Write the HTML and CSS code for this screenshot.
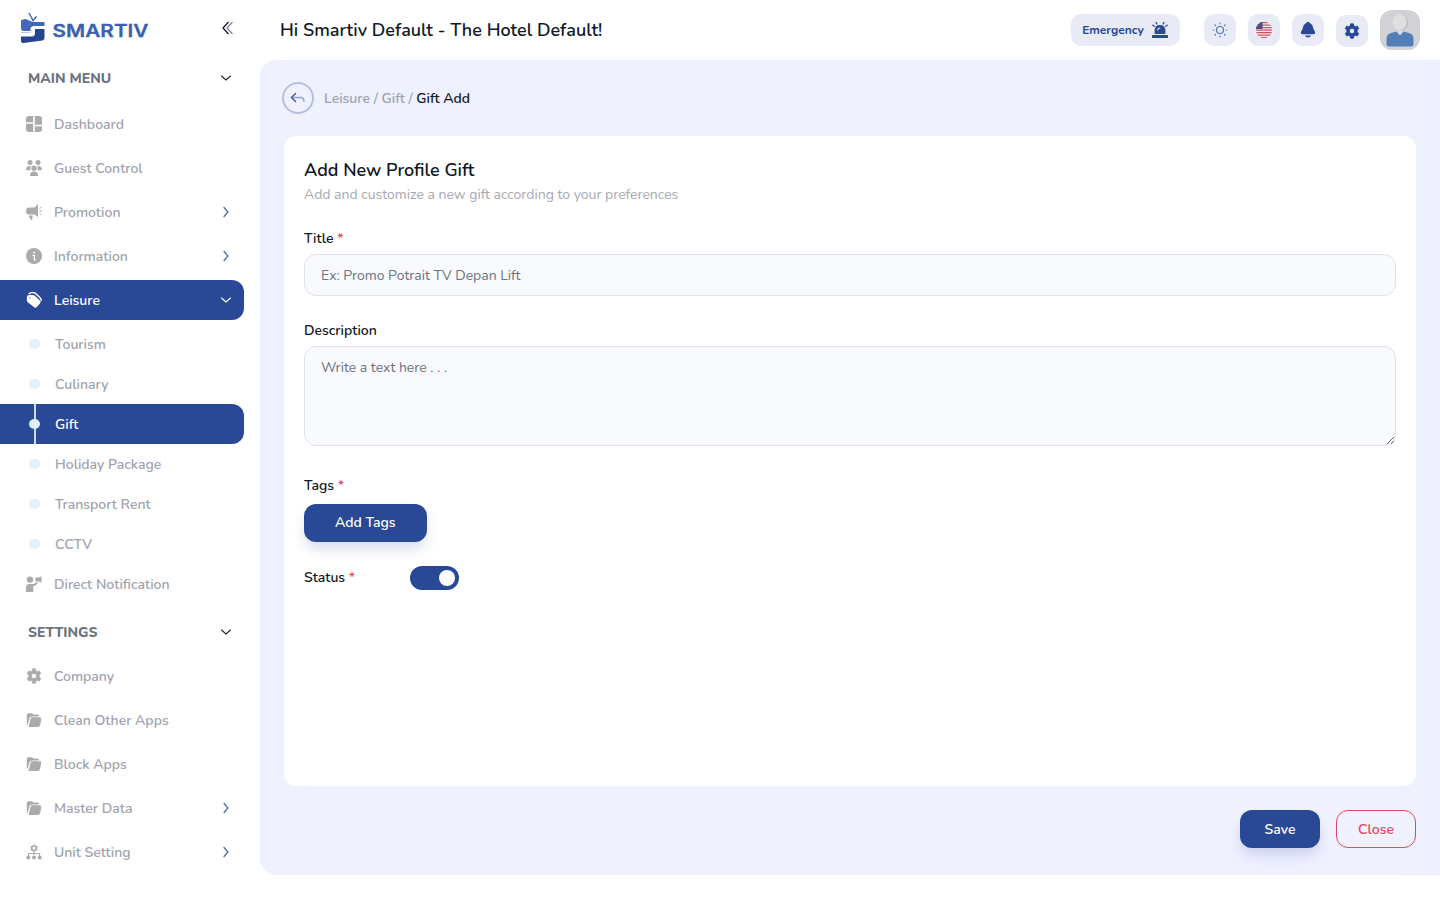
FILE: index.html
```html
<!DOCTYPE html>
<html lang="en">
<head>
    <meta charset="UTF-8">
    <meta name="viewport" content="width=device-width, initial-scale=1.0">
    <title>Smartiv - Gift Add</title>
    <link rel="stylesheet" href="styles.css">
</head>
<body>

    <!-- shared icons -->
    <svg class="icon-defs" width="0" height="0">
        <symbol id="chevron-right" viewBox="0 0 12 12">
            <path d="M4 1.500L8 6L4 10.500" fill="none" stroke="currentColor" stroke-width="1.200" stroke-linecap="round"/>
        </symbol>
        <symbol id="chevron-down" viewBox="0 0 12 12">
            <path d="M1.500 4L6 7.900L10.500 4" fill="none" stroke="currentColor" stroke-width="1.100" stroke-linecap="round"/>
        </symbol>
        <symbol id="gear" viewBox="0 0 16 16">
            <path fill-rule="evenodd" d="M6.700 .8h2.600l.6 2.100 1.400.8 2.100-.6 1.300 2.300-1.500 1.700v1.800l1.500 1.700-1.300 2.300-2.100-.6-1.400.8-.6 2.100H6.700l-.6-2.100-1.400-.8-2.100.6-1.300-2.300 1.500-1.700V7.100L1.300 5.400l1.300-2.300 2.100.6 1.400-.8zM8 5.300a2.700 2.700 0 1 0 0 5.400a2.700 2.700 0 0 0 0-5.400z" fill="currentColor" stroke="currentColor" stroke-width=".9" stroke-linejoin="round"/>
        </symbol>
        <symbol id="folder" viewBox="0 0 16 16">
            <path d="M.8 11.800V3Q.8 1.300 2.500 1.300h2.800q1 0 1.600.7l.5.500h3.800q1.900 0 2.100 1.900H6.200Q4.200 4.400 3.600 6.200L1.500 13Q.8 12.600.8 11.800z" fill="currentColor"/>
            <path d="M6.300 5.300h7.600q1.700 0 1.300 1.800l-.9 5.500q-.4 2.300-2.400 2.300H2.500L4.600 6.700q.4-1.400 1.700-1.400z" fill="currentColor"/>
        </symbol>
    </svg>

    <div class="layout">
        <aside class="sidebar">
            <div class="brand">
                <svg class="logo" width="132" height="34" viewBox="0 0 132 34">
                    <path d="M9 2l4 7.500M16.500 5.500L12.500 10" fill="none" stroke="#3d64b0" stroke-width="1.400"/>
                    <path d="M1 9.500Q5 6.500 9 9.500q3 2 15.500 1.500v4H14.500q-4.200 0-4.200 4v1H4Q1 20 1 17z" fill="#4369b6"/>
                    <path d="M15 18h9.500v9q0 2-2 2.400L3.500 32Q1 32.300 1 30v-4.500h10.500q3.500 0 3.500-3.500z" fill="#26458f"/>
                    <path d="M1 21.500h8q2.500 0 2.500-2.300" fill="none" stroke="#a9bbdf" stroke-width=".8"/>
                    <text x="32.500" y="26" textLength="96" lengthAdjust="spacingAndGlyphs">SMARTIV</text>
                </svg>
                <svg width="12" height="14" viewBox="0 0 12 14">
                    <path d="M6.500 1L1 7l5.500 6" fill="none" stroke="#101827" stroke-width="1.300"/>
                    <path d="M10.500 1L5 7l5.500 6" fill="none" stroke="#7c828d" stroke-width="1.200"/>
                </svg>
            </div>

            <div class="menu-heading">MAIN MENU <svg class="chevron"><use href="#chevron-down"/></svg></div>
            <ul class="menu">
                <li class="menu-item">
                    <svg class="icon" viewBox="0 0 16 16" fill="currentColor"><path d="M3 0h4.200v6.300H0V3Q0 0 3 0zM8.800 0H13q3 0 3 3v5.800H8.800zM0 7.700h7.200V16H3q-3 0-3-3zM8.800 10.200H16V13q0 3-3 3H8.800z"/></svg>
                    <span>Dashboard</span>
                </li>
                <li class="menu-item">
                    <svg class="icon" viewBox="0 0 16 16" fill="currentColor"><circle cx="4" cy="2.600" r="2.500"/><circle cx="12" cy="2.600" r="2.500"/><circle cx="8" cy="8.200" r="2.600"/><path d="M0 10.300Q0 6 3.600 6l1.200.4q-1.300 2 0 3.900zM16 10.300Q16 6 12.400 6l-1.200.4q1.300 2 0 3.900zM4 16q0-4.400 4-4.400t4 4.400z"/></svg>
                    <span>Guest Control</span>
                </li>
                <li class="menu-item">
                    <svg class="icon" viewBox="0 0 16 16" fill="currentColor"><path d="M12 0v13L8.500 10.500H3Q0 10.500 0 7T3 3.500h5.500zM2.700 11.600h4l-.5 4.200H4.600z"/><path d="M13.500 4.300l2-1M13.500 7H16M13.500 9.700l2 1" stroke="currentColor" stroke-width="1"/></svg>
                    <span>Promotion</span>
                    <svg class="chevron"><use href="#chevron-right"/></svg>
                </li>
                <li class="menu-item">
                    <svg class="icon" viewBox="0 0 16 16"><circle cx="8" cy="8" r="8" fill="currentColor"/><circle cx="8.200" cy="4.500" r="1" fill="#fff"/><path d="M6.500 7.300H8.400V12M8.400 12h1.200" fill="none" stroke="#fff" stroke-width="1.300"/></svg>
                    <span>Information</span>
                    <svg class="chevron"><use href="#chevron-right"/></svg>
                </li>
                <li class="menu-item active">
                    <svg class="icon" viewBox="0 0 16 16"><path d="M.8 5.500Q.8 3.300 3 3.100L6.500 2.900q1.200 0 2 .7l5.200 4.700q1.600 1.600.2 3.200l-3 3.500q-1.500 1.400-3 0L1.700 10.300Q.8 9.500.8 8.300z" fill="currentColor"/><path d="M2.500 1.800Q6 .3 8.200.8q.8.200 1.400.8l4.500 4.200q1.500 1.600.8 3.200" fill="none" stroke="currentColor" stroke-width="1.400"/><circle cx="4" cy="5.800" r=".6" fill="#294896"/></svg>
                    <span>Leisure</span>
                    <svg class="chevron"><use href="#chevron-down"/></svg>
                </li>
            </ul>
            <ul class="submenu">
                <li>Tourism</li>
                <li>Culinary</li>
                <li class="active">Gift</li>
                <li>Holiday Package</li>
                <li>Transport Rent</li>
                <li>CCTV</li>
            </ul>
            <ul class="menu">
                <li class="menu-item">
                    <svg class="icon" viewBox="0 0 16 16" fill="currentColor"><circle cx="4" cy="3.600" r="3.200"/><path d="M0 16v-4.500Q0 8 3.500 8H7q2.500 0 3.300-2l1.500.5Q10.800 9.800 7.300 10v6zM9.500 1.500h3.300L15.500.200v6.500l-2.700-1.100H9.500z"/></svg>
                    <span>Direct Notification</span>
                </li>
            </ul>

            <div class="menu-heading">SETTINGS <svg class="chevron"><use href="#chevron-down"/></svg></div>
            <ul class="menu">
                <li class="menu-item"><svg class="icon"><use href="#gear"/></svg><span>Company</span></li>
                <li class="menu-item"><svg class="icon"><use href="#folder"/></svg><span>Clean Other Apps</span></li>
                <li class="menu-item"><svg class="icon"><use href="#folder"/></svg><span>Block Apps</span></li>
                <li class="menu-item">
                    <svg class="icon"><use href="#folder"/></svg>
                    <span>Master Data</span>
                    <svg class="chevron"><use href="#chevron-right"/></svg>
                </li>
                <li class="menu-item">
                    <svg class="icon" viewBox="0 0 16 16"><circle cx="8" cy="4.300" r="2.300" fill="none" stroke="currentColor" stroke-width="1.700"/><path d="M8 .3v1.700M8 6.600V11M4.500 2.300l1.500.9M11.500 2.300l-1.500.9M4.500 6.300L6 5.400M11.500 6.300L10 5.400M2.500 12V9.500h11V12" fill="none" stroke="currentColor" stroke-width="1.100"/><g fill="currentColor"><circle cx="2.300" cy="13.600" r="2"/><circle cx="8" cy="13.600" r="2"/><circle cx="13.700" cy="13.600" r="2"/></g></svg>
                    <span>Unit Setting</span>
                    <svg class="chevron"><use href="#chevron-right"/></svg>
                </li>
            </ul>
        </aside>

        <div class="page">
            <header class="topbar">
                <h1>Hi Smartiv Default - The Hotel Default!</h1>
                <div class="actions">
                    <button class="emergency">
                        <span>Emergency</span>
                        <svg width="16" height="16" viewBox="0 0 16 16" fill="#294896"><path d="M2.600 12V8.500Q2.600 3 8 3t5.400 5.500V12z"/><rect x="0" y="13" width="16" height="3" rx=".6"/><path d="M.8 3.200l1.500 1M4 .4l.8 1.500M12 .4l-.8 1.500M15.200 3.200l-1.500 1" stroke="#294896" stroke-width="1.300" stroke-linecap="round"/><path d="M5.700 8Q5.900 6.200 7.700 6" fill="none" stroke="#e9ebf5" stroke-width="1.200" stroke-linecap="round"/></svg>
                    </button>
                    <button class="icon-btn">
                        <svg width="16" height="16" viewBox="0 0 16 16" fill="none" stroke="#5873b3" stroke-width="1.200" stroke-linecap="round"><circle cx="8" cy="8" r="3.500"/><path d="M8 1.200v.6M8 14.200v.6M1.200 8h.6M14.200 8h.6M3 3l.5.5M12.500 12.500l.5.5M3 13l.5-.5M12.500 3.500l.5-.5"/></svg>
                    </button>
                    <button class="icon-btn">
                        <svg width="18" height="18" viewBox="0 0 18 18"><defs><clipPath id="flag"><circle cx="9" cy="9" r="8.200"/></clipPath></defs><g clip-path="url(#flag)"><path fill="#f4edf2" d="M0 0h18v18H0z"/><path d="M0 1.700h18M0 4.200h18M0 6.700h18M0 9.200h18M0 11.700h18M0 14.200h18M0 16.700h18" stroke="#d24f61" stroke-width="1.250"/><path fill="#414a78" d="M0 0h7.500v8H0z"/><path d="M3 3h4M2 5h5M1.500 7H7" stroke="#98a0bf" stroke-width=".5" stroke-dasharray=".7 1"/></g></svg>
                    </button>
                    <button class="icon-btn">
                        <svg width="16" height="16" viewBox="0 0 16 16" fill="#294896"><path d="M8 0q1.600 0 2.100 1.200 2.700 1.100 3 4.400.1 1.600 1.200 2.900.9 1.200.8 2.300-.2 1.500-1.800 1.500H2.700q-1.600 0-1.800-1.500-.1-1.100.8-2.300 1.100-1.300 1.200-2.900.3-3.300 3-4.400Q6.400 0 8 0zM5 13.500h6q-.8 2-3 2t-3-2z"/></svg>
                    </button>
                    <button class="icon-btn settings"><svg width="16" height="16"><use href="#gear"/></svg></button>
                    <svg class="avatar" viewBox="0 0 40 40"><path fill="#d1d2d5" d="M0 0h40v40H0z"/><ellipse cx="21" cy="12.500" rx="7" ry="8" fill="#bdc0c3"/><ellipse cx="19.500" cy="12" rx="7" ry="8" fill="#dfdfe0"/><path d="M6.500 34V29q0-5 4.500-6l5.500-1.500 3.500 4 3.500-4L29 23q4.500 1 4.500 6v5q0 2.500-2.500 2.500H9q-2.500 0-2.500-2.500z" fill="#547fb6"/><path d="M17 21l3-.5 3 .5-3 4z" fill="#dcdee2"/></svg>
                </div>
            </header>

            <main>
                <div class="breadcrumb">
                    <button class="back">
                        <svg width="16" height="14" viewBox="0 0 16 14" fill="none" stroke-width="1.300" stroke-linecap="round" stroke-linejoin="round"><path d="M2 6.500h8q4 0 4 4" stroke="#93a3cd"/><path d="M5.500 2.500L1.500 6.500l4 4" stroke="#355299"/></svg>
                    </button>
                    <p>Leisure / Gift / <b>Gift Add</b></p>
                </div>

                <form>
                    <section class="card">
                        <h2>Add New Profile Gift</h2>
                        <p class="subtitle">Add and customize a new gift according to your preferences</p>

                        <label for="title">Title <i>*</i></label>
                        <input type="text" id="title" placeholder="Ex: Promo Potrait TV Depan Lift">

                        <label for="description">Description</label>
                        <textarea id="description" placeholder="Write a text here . . ."></textarea>

                        <label>Tags <i>*</i></label>
                        <button type="button" class="btn btn-tags">Add Tags</button>

                        <div class="status">
                            <label>Status <i>*</i></label>
                            <span class="toggle"></span>
                        </div>
                    </section>

                    <div class="form-actions">
                        <button type="button" class="btn">Save</button>
                        <button type="button" class="btn btn-close">Close</button>
                    </div>
                </form>
            </main>
        </div>
    </div>

</body>
</html>
```
FILE: styles.css
```css
* {
    margin: 0;
    padding: 0;
    box-sizing: border-box;
}

body {
    background: #fff;
    color: #111827;
    font-family: Nunito, Lato, sans-serif;
    font-size: 14px;
    font-weight: 600;
    line-height: 21px;
    overflow: hidden;
}

button, input, textarea {
    font: inherit;
}

button {
    border: none;
    cursor: pointer;
}

ul {
    list-style: none;
}

.icon-defs {
    display: block;
}

.layout {
    display: flex;
    height: 900px;
}

/* Sidebar */
.sidebar {
    width: 260px;
    flex-shrink: 0;
    color: #a0a3ae;
}

.brand {
    display: flex;
    align-items: center;
    justify-content: space-between;
    height: 56px;
    padding: 0 26px 0 20px;
}

.logo text {
    font-family: Inter, sans-serif;
    font-size: 17px;
    font-weight: 600;
    fill: #3b60ae;
    stroke: #3b60ae;
    stroke-width: 0.3px;
}

.menu-heading {
    display: flex;
    align-items: center;
    justify-content: space-between;
    width: 244px;
    height: 48px;
    padding: 0 12px 0 28px;
    color: #6b7280;
    font-weight: 800;
}

.brand + .menu-heading {
    height: 44px;
    margin-bottom: 4px;
}

.menu-heading .chevron {
    color: #1c2432;
}

.menu-item {
    display: flex;
    align-items: center;
    gap: 12px;
    width: 244px;
    height: 40px;
    margin-bottom: 4px;
    padding: 0 12px 0 26px;
}

.icon {
    width: 16px;
    height: 16px;
    color: #ababab;
}

.chevron {
    width: 12px;
    height: 12px;
    margin-left: auto;
    color: #4b659b;
}

.menu-item.active,
.submenu .active {
    background: #294896;
    color: #fff;
    border-radius: 0 12px 12px 0;
}

.menu-item.active .icon,
.menu-item.active .chevron {
    color: #fff;
}

.submenu li {
    display: flex;
    align-items: center;
    gap: 15px;
    width: 244px;
    height: 40px;
    padding-left: 29px;
}

.submenu li::before {
    content: "";
    width: 11px;
    height: 10px;
    border-radius: 50%;
    background: #e0f0ff;
}

.submenu .active {
    background: linear-gradient(#c9dcf5, #c9dcf5) 33.5px 0 / 2px 100% no-repeat #294896;
}

/* Topbar */
.page {
    flex: 1;
}

.topbar {
    display: flex;
    align-items: center;
    justify-content: space-between;
    height: 60px;
    padding: 0 20px;
}

h1, h2 {
    font-size: 18px;
    font-weight: 600;
    line-height: 28px;
}

.actions {
    display: flex;
    align-items: center;
    gap: 12px;
}

.emergency,
.icon-btn {
    display: flex;
    align-items: center;
    justify-content: center;
    height: 32px;
    border-radius: 10px;
    background: #e8ebf5;
    color: #294896;
}

.emergency {
    gap: 8px;
    width: 109px;
    margin-right: 12px;
    padding-right: 1px;
    font-size: 12px;
    font-weight: 700;
}

.icon-btn {
    width: 32px;
}

.settings {
    margin-top: 1px;
}

.avatar {
    width: 40px;
    height: 40px;
    border-radius: 12px;
}

/* Content */
main {
    height: 815px;
    padding: 22px 24px 27px;
    border-radius: 16px 0 0 16px;
    background: linear-gradient(to left, #edf0fc, #eff1ff 40px);
}

.breadcrumb {
    display: flex;
    align-items: center;
    gap: 10px;
    margin: 0 0 22px -2px;
    color: #a0a3ae;
}

.breadcrumb b {
    color: #111827;
    font-weight: 600;
}

.back {
    display: flex;
    align-items: center;
    justify-content: center;
    width: 32px;
    height: 32px;
    border: 2px solid #b5c0df;
    border-radius: 50%;
    background: none;
}

.card {
    height: 650px;
    padding: 20px;
    border-radius: 12px;
    background: #fff;
}

.subtitle {
    margin-bottom: 23px;
    color: #a6a8b1;
    font-weight: 400;
}

label {
    display: block;
    margin-bottom: 5px;
}

label i {
    color: #e14d5a;
    font-style: normal;
}

input, textarea {
    display: block;
    width: 100%;
    padding: 10px 16px;
    border: 1px solid #dfe2ec;
    border-radius: 12px;
    background: #f9fafe;
    font-weight: 400;
}

input {
    height: 42px;
    margin-bottom: 24px;
}

textarea {
    height: 100px;
    margin-bottom: 29px;
}

::placeholder {
    color: #6b7280;
}

.btn {
    width: 80px;
    height: 38px;
    border-radius: 12px;
    background: #294896;
    color: #fff;
    box-shadow: 0 8px 14px -2px rgba(41, 72, 150, 0.2);
}

.btn-tags {
    display: block;
    width: 122.5px;
    margin: 7.5px 0 24px;
}

.status {
    display: flex;
    align-items: center;
}

.status label {
    width: 106px;
    margin: 0;
}

.toggle {
    width: 48.5px;
    height: 24px;
    padding: 4px;
    border-radius: 12px;
    background: #294896;
}

.toggle::after {
    content: "";
    display: block;
    width: 16px;
    height: 16px;
    margin-left: auto;
    border-radius: 50%;
    background: #fff;
}

.form-actions {
    display: flex;
    justify-content: flex-end;
    gap: 16px;
    margin-top: 24px;
}

.btn-close {
    border: 1px solid #dc4b5a;
    background: none;
    color: #dc4b5a;
    box-shadow: none;
}
```
